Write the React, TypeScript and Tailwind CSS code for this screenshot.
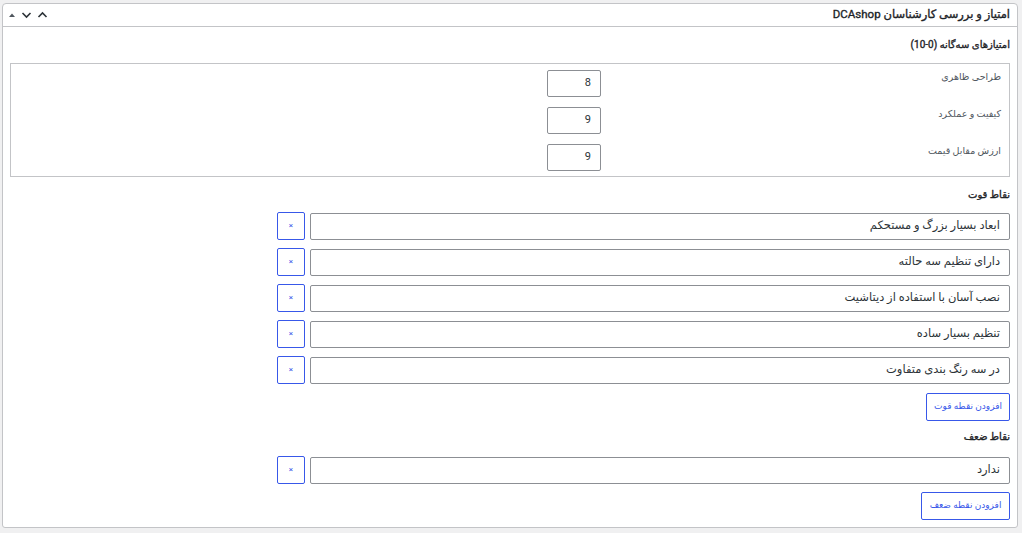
import React from "react";

const strengths = [
  "ابعاد بسیار بزرگ و مستحکم",
  "دارای تنظیم سه حالته",
  "نصب آسان با استفاده از دیتاشیت",
  "تنظیم بسیار ساده",
  "در سه رنگ بندی متفاوت",
];

const scores = [
  { label: "طراحی ظاهری", value: "8" },
  { label: "کیفیت و عملکرد", value: "9" },
  { label: "ارزش مقابل قیمت", value: "9" },
];

function Row({ text }: { text: string }) {
  return (
    <div className="flex items-center gap-[5px]">
      <div className="w-[700px] h-[27px] border border-[#8c8f94] rounded-[2px] flex items-center px-[9px] text-[11.5px] text-[#2c3338]">
        {text}
      </div>
      <button className="w-[28px] h-[28px] border border-[#3858e9] rounded-[2px] flex items-center justify-center text-[8px] text-[#3858e9] leading-none">
        ×
      </button>
    </div>
  );
}

export default function App() {
  return (
    <div
      className="bg-[#f0f0f1] h-[533px] pt-[3px] pl-[2px] pr-[4px]"
      style={{ fontFamily: "Roboto, 'DejaVu Sans', sans-serif" }}
    >
      <div className="bg-white border border-[#c3c4c7] rounded-t-[4px] rounded-b-[3px]" dir="rtl">
        <div className="h-[23px] border-b border-[#c3c4c7] flex items-center justify-between pr-[7px] pl-[5px]">
          <div className="text-[11.5px] text-[#1d2327] [-webkit-text-stroke:0.35px_#1d2327]">
            امتیاز و بررسی کارشناسان DCAshop
          </div>
          <div className="flex items-center gap-[5px]" dir="ltr">
            <svg width="8" height="8" viewBox="0 0 8 8">
              <path d="M1 6 L4 2.5 L7 6 Z" fill="#50575e" />
            </svg>
            <svg width="11" height="8" viewBox="0 0 11 8">
              <path d="M1.5 2 L5.5 6 L9.5 2" fill="none" stroke="#2c3338" strokeWidth="1.6" />
            </svg>
            <svg width="11" height="8" viewBox="0 0 11 8">
              <path d="M1.5 6 L5.5 2 L9.5 6" fill="none" stroke="#2c3338" strokeWidth="1.6" />
            </svg>
          </div>
        </div>
        <div className="px-[7px] pt-[10px] pb-[7px]">
          <div className="text-[10px] text-[#1d2327] leading-[16px] mb-[10px] [-webkit-text-stroke:0.35px_#1d2327]">
            امتیازهای سه‌گانه (0-10)
          </div>
          <div className="border border-[#c3c4c7] pt-[6px] pb-[5px] pr-[8px] flex flex-col gap-[10px]">
            {scores.map((s) => (
              <div key={s.label} className="flex items-start">
                <div className="w-[400px] shrink-0 text-[9.5px] text-[#50575e] leading-[12px] pt-[1px]">
                  {s.label}
                </div>
                <div className="w-[54px] h-[27px] border border-[#8c8f94] rounded-[2px] flex items-center px-[9px] text-[11px] text-[#2c3338]">
                  {s.value}
                </div>
              </div>
            ))}
          </div>
          <div className="text-[10px] text-[#1d2327] leading-[16px] mt-[10px] mb-[9px] [-webkit-text-stroke:0.35px_#1d2327]">
            نقاط قوت
          </div>
          <div className="flex flex-col gap-[8px]">
            {strengths.map((t) => (
              <Row key={t} text={t} />
            ))}
          </div>
          <button className="mt-[9px] h-[28px] w-[84px] border border-[#3858e9] rounded-[2px] text-[9px] text-[#3858e9] flex items-center justify-center">
            افزودن نقطه قوت
          </button>
          <div className="text-[10px] text-[#1d2327] leading-[16px] mt-[8px] mb-[11px] [-webkit-text-stroke:0.35px_#1d2327]">
            نقاط ضعف
          </div>
          <Row text="ندارد" />
          <button className="mt-[8px] h-[28px] w-[89px] border border-[#3858e9] rounded-[2px] text-[9px] text-[#3858e9] flex items-center justify-center">
            افزودن نقطه ضعف
          </button>
        </div>
      </div>
    </div>
  );
}
